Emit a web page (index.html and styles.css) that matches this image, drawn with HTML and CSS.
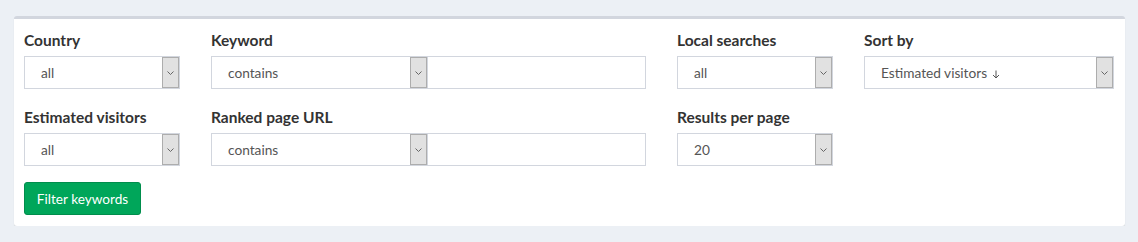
FILE: index.html
```html
<!DOCTYPE html>
<html>
<head>
<meta charset="utf-8">
<link rel="stylesheet" href="styles.css">
</head>
<body>
<div class="box">
  <div class="grid">
    <div class="field">
      <div class="label">Country</div>
      <div class="select w156"><span class="val">all</span><span class="arrow"><svg width="9" height="6" viewBox="0 0 9 6"><path d="M1.5 1.5 L4.5 4.5 L7.5 1.5" fill="none" stroke="#666" stroke-width="1"/></svg></span></div>
    </div>
    <div class="field">
      <div class="label">Keyword</div>
      <div class="combo">
        <div class="select w217"><span class="val">contains</span><span class="arrow"><svg width="9" height="6" viewBox="0 0 9 6"><path d="M1.5 1.5 L4.5 4.5 L7.5 1.5" fill="none" stroke="#666" stroke-width="1"/></svg></span></div>
        <div class="input"></div>
      </div>
    </div>
    <div class="field">
      <div class="label">Local searches</div>
      <div class="select w156"><span class="val">all</span><span class="arrow"><svg width="9" height="6" viewBox="0 0 9 6"><path d="M1.5 1.5 L4.5 4.5 L7.5 1.5" fill="none" stroke="#666" stroke-width="1"/></svg></span></div>
    </div>
    <div class="field">
      <div class="label">Sort by</div>
      <div class="select w250"><span class="val">Estimated visitors <svg class="sortarrow" width="8" height="9" viewBox="0 0 8 9"><path d="M4 0.5 V8 M1 5 L4 8 L7 5" fill="none" stroke="#555" stroke-width="1"/></svg></span><span class="arrow"><svg width="9" height="6" viewBox="0 0 9 6"><path d="M1.5 1.5 L4.5 4.5 L7.5 1.5" fill="none" stroke="#666" stroke-width="1"/></svg></span></div>
    </div>

    <div class="field">
      <div class="label">Estimated visitors</div>
      <div class="select w156"><span class="val">all</span><span class="arrow"><svg width="9" height="6" viewBox="0 0 9 6"><path d="M1.5 1.5 L4.5 4.5 L7.5 1.5" fill="none" stroke="#666" stroke-width="1"/></svg></span></div>
    </div>
    <div class="field">
      <div class="label">Ranked page URL</div>
      <div class="combo">
        <div class="select w217"><span class="val">contains</span><span class="arrow"><svg width="9" height="6" viewBox="0 0 9 6"><path d="M1.5 1.5 L4.5 4.5 L7.5 1.5" fill="none" stroke="#666" stroke-width="1"/></svg></span></div>
        <div class="input"></div>
      </div>
    </div>
    <div class="field">
      <div class="label">Results per page</div>
      <div class="select w156"><span class="val">20</span><span class="arrow"><svg width="9" height="6" viewBox="0 0 9 6"><path d="M1.5 1.5 L4.5 4.5 L7.5 1.5" fill="none" stroke="#666" stroke-width="1"/></svg></span></div>
    </div>
  </div>
  <button class="btn">Filter keywords</button>
</div>
</body>
</html>
```

FILE: styles.css
```css
* { box-sizing: border-box; }
body {
  margin: 0;
  padding: 16px 13px 0 14px;
  background: #ecf0f5;
  font-family: "Lato", "Open Sans", sans-serif;
}
.box {
  width: 1111px;
  background: #fff;
  border-top: 3px solid #d2d6de;
  border-radius: 3px;
  box-shadow: 0 1px 1px rgba(0,0,0,0.12);
  padding: 12px 10px 11px 10px;
}
.grid {
  display: grid;
  grid-template-columns: 156px 435px 156px 250px;
  column-gap: 31px;
  row-gap: 19px;
}
.label {
  font-weight: 700;
  font-size: 15.5px;
  color: #333;
  line-height: 18px;
  margin-bottom: 7px;
}
.combo { display: flex; }
.select {
  height: 33px;
  border: 1px solid #d2d6de;
  display: flex;
  align-items: stretch;
  justify-content: space-between;
  background: #fff;
}
.w156 { width: 156px; }
.w217 { width: 217px; }
.w250 { width: 250px; }
.val {
  font-size: 13.7px;
  color: #555;
  padding-left: 16px;
  line-height: 31px;
}
.sortarrow {
  vertical-align: -1px;
  margin-left: 1px;
}
.arrow {
  width: 17px;
  background: #e1e1e1;
  border: 1px solid #adadad;
  display: flex;
  align-items: center;
  justify-content: center;
}
.input {
  width: 218px;
  height: 33px;
  border: 1px solid #d2d6de;
  border-left: none;
  background: #fff;
}
.btn {
  margin-top: 16px;
  display: block;
  width: 117px;
  height: 33px;
  background: #00a65a;
  border: 1px solid #008d4c;
  border-radius: 3px;
  color: #fff;
  font-family: "Lato", "Open Sans", sans-serif;
  font-size: 13.6px;
  padding: 0;
}
```
